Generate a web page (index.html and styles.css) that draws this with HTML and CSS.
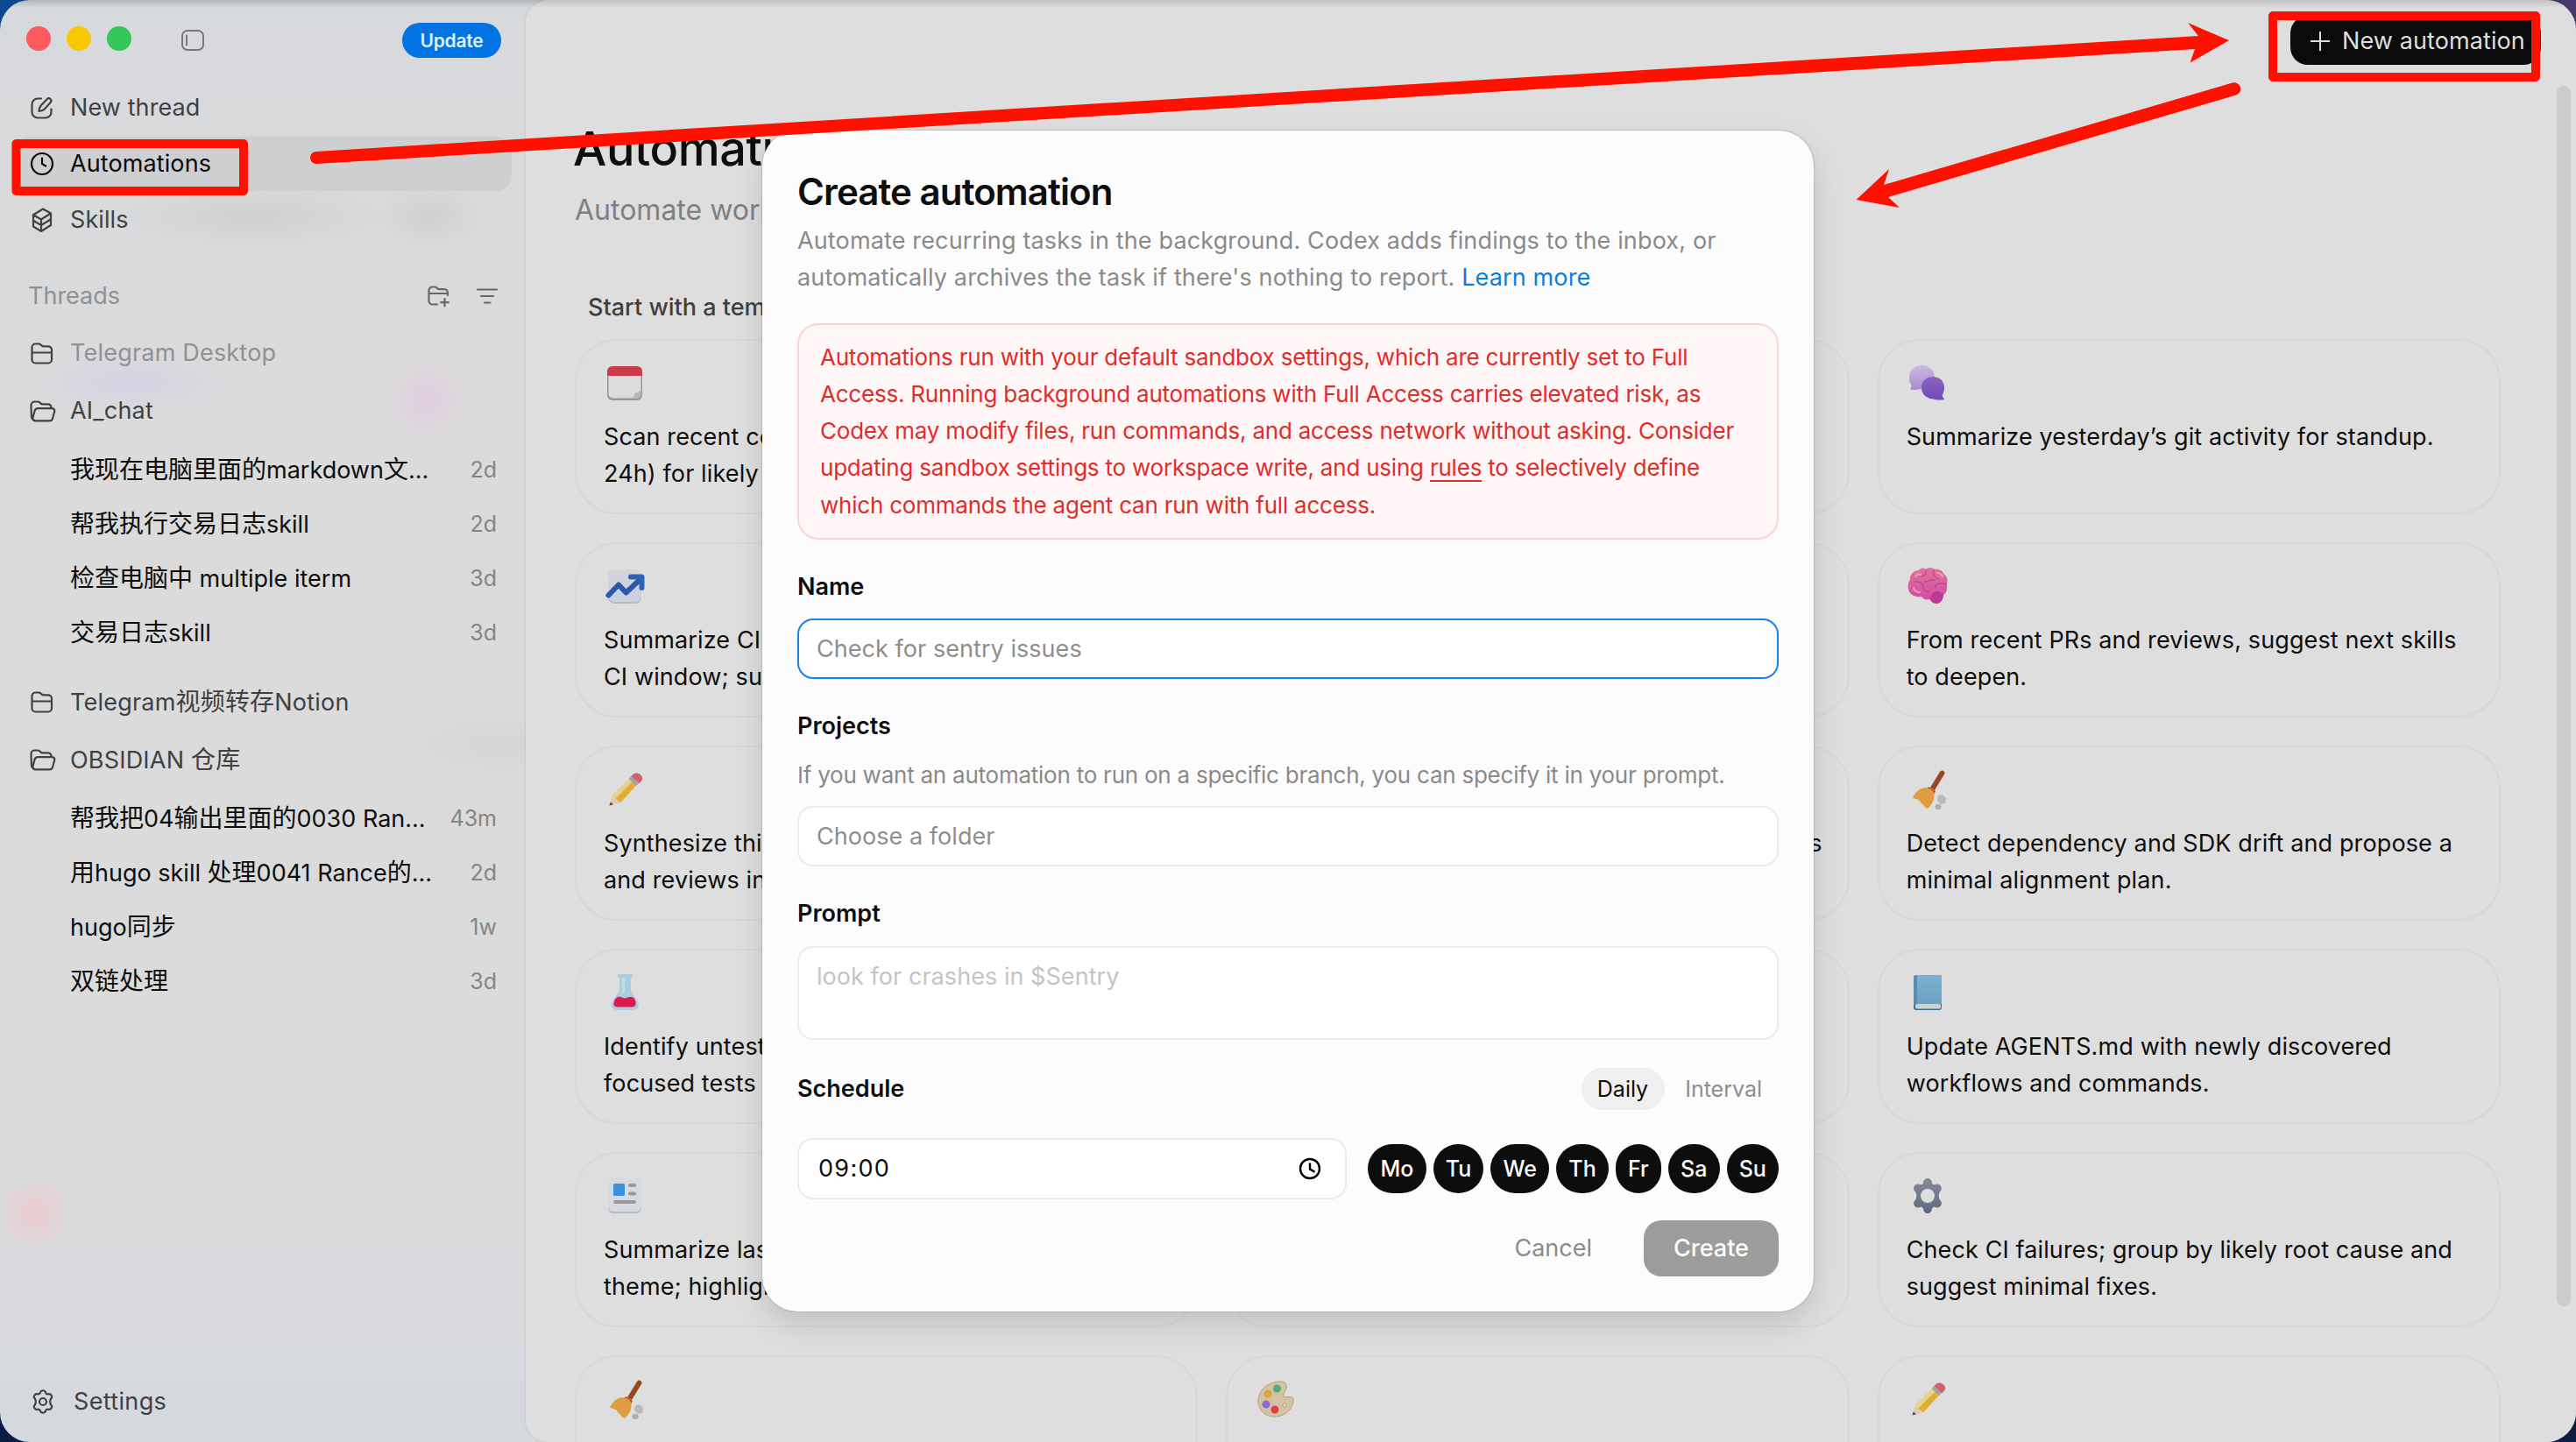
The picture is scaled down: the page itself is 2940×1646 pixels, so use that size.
FILE: index.html
```
<!DOCTYPE html>
<html lang="en">
<head>
    <meta charset="utf-8">
    <title>Automations</title>
    <link rel="stylesheet" href="styles.css">
</head>
<body>
    <!-- icon sprite -->
    <svg class="sprite">
        <defs>
            <linearGradient id="gBubbleA" x1="0" y1="0" x2="0" y2="1"><stop offset="0" stop-color="#cdb8e3"/><stop offset="1" stop-color="#a68ed0"/></linearGradient>
            <linearGradient id="gBubbleB" x1="0" y1="0" x2="0" y2="1"><stop offset="0" stop-color="#8d63c8"/><stop offset="1" stop-color="#6d4cb2"/></linearGradient>
            <linearGradient id="gBrain" x1="0" y1="0" x2="0" y2="1"><stop offset="0" stop-color="#e2739a"/><stop offset="1" stop-color="#cf49a6"/></linearGradient>
            <linearGradient id="gBook" x1="0" y1="0" x2="0" y2="1"><stop offset="0" stop-color="#7db2d2"/><stop offset="1" stop-color="#6c9fc2"/></linearGradient>
            <linearGradient id="gGear" x1="0" y1="0" x2="0" y2="1"><stop offset="0" stop-color="#868b95"/><stop offset="1" stop-color="#5c6880"/></linearGradient>
            <linearGradient id="gPage" x1="0" y1="0" x2="0" y2="1"><stop offset="0" stop-color="#d3d6da"/><stop offset="1" stop-color="#c9d0df"/></linearGradient>
        </defs>
        <symbol id="folder" viewBox="0 0 28 28">
            <path d="M2.5 7.5a4 4 0 0 1 4-4h3.6c1 0 1.700.3 2.400 1l1 .9c.6.6 1.300.9 2.200.9h5.300a4 4 0 0 1 4 4v11.200a4 4 0 0 1-4 4H6.500a4 4 0 0 1-4-4zM2.500 13.500h22.500"/>
        </symbol>
        <symbol id="folder-open" viewBox="0 0 30 28">
            <path d="M5 24.500C3 24 2 22.500 1.900 20.500L1.500 7.500a4 4 0 0 1 4-4H9c1 0 1.700.3 2.400 1l1 .9c.6.6 1.300.9 2.200.9h5.900c2.200 0 3.800 1.500 4 3.700v1.200M9.200 11.200h16.300c2 0 3.200 1.700 2.700 3.500l-2.200 8c-.5 1.700-1.800 2.700-3.500 2.700H6.300c-2 0-3.300-1.700-2.800-3.600l2.100-7.800c.5-1.700 1.900-2.800 3.600-2.800z"/>
        </symbol>
        <symbol id="broom" viewBox="0 0 48 48">
            <path d="M27 22 38 4c1-1.500 2.500-2 4-1s2 2.500 1 4L32 25z" fill="#98481d"/>
            <path d="M25 21l8 5-2 4-9-5z" fill="#b5442a"/>
            <path d="M23 22c4 1 7 3 8.500 6 .5 7-1.500 13-7.500 18-3-1-5-3.500-6-6-1 .3-1 .3-1.500 0-.5-3-3-5-9.500-6 3-8 9-12 16-12z" fill="#e09c41"/>
            <path d="M36 31l5-1 4 4-1 6-5 1-4-4z" fill="#b9b9bb"/>
            <path d="M34 41l4 0 2 3-2 3h-4l-2-3z" fill="#aeaeb0"/>
        </symbol>
        <symbol id="pencil" viewBox="0 0 48 48">
            <path d="M6.500 42.500 10 30.500 19.500 39z" fill="#dfcdac"/>
            <path d="M6.500 42.500 7.700 38.500l3.300 2.800z" fill="#4c4c4c"/>
            <path d="M10 30.500 29 11.500l5 4.500-19.500 19z" fill="#ead08a"/>
            <path d="M13.500 34.500 33 15l4.500 4-18 20z" fill="#dfae34"/>
            <path d="M28.500 12l3.500-3.500 8.500 8-3.500 3.500z" fill="#a3a3a3"/>
            <path d="M31.500 9c3-4 7-4.500 10.500-1.500s2.500 6.500-1.500 9.500z" fill="#d0616b"/>
        </symbol>
        <symbol id="calendar" viewBox="0 0 48 48">
            <rect x="4" y="5" width="40" height="39" rx="6" fill="#989898"/>
            <rect x="5.500" y="9" width="37" height="32.500" rx="5" fill="#dcdcdc"/>
            <path d="M4 16v-5a6 6 0 0 1 6-6h28a6 6 0 0 1 6 6v5z" fill="#cb3b4a"/>
            <path d="M30 41.500c5-1 5.500-3 5.500-6 4 0 6.500-2 7-6v7a5 5 0 0 1-5 5z" fill="#b7b7b7"/>
        </symbol>
        <symbol id="bubbles" viewBox="0 0 48 48">
            <path d="M17.500 4C9 4 3 10 3 17.500c0 4.500 1 7 2.500 9.500L4.500 32c7 0 12-.5 16-2.500C27 27.500 32 24 32 17.500 32 10 26 4 17.500 4z" fill="url(#gBubbleA)"/>
            <path d="M30 17c8 0 13 5.500 13 12 0 4-1 7.500-2.500 9.500L43 43c-5 .8-9 .8-13-.5-8-1-13-6-13-13S22 17 30 17z" fill="url(#gBubbleB)"/>
        </symbol>
        <symbol id="chart" viewBox="0 0 48 48">
            <rect x="5" y="6" width="38" height="38" rx="7" fill="#b5bac6"/>
            <rect x="5" y="5" width="38" height="37" rx="7" fill="url(#gPage)"/>
            <path d="M5.500 34.500 17 22.500l8.500 9L42 16" fill="none" stroke="#2b58a8" stroke-width="6" stroke-linejoin="round" stroke-linecap="round"/>
            <path d="M31 13.500h12.500V26" fill="none" stroke="#2f62b5" stroke-width="6" stroke-linejoin="round" stroke-linecap="round"/>
        </symbol>
        <symbol id="brain" viewBox="0 0 48 48">
            <path d="M14 6c2-3 6-3 8-1 3-3 8-2 10 0 5-1 10 2 11 6 4 2 4 7 3 11 1 6-1 10-4 12 0 5-3 9-7 9-4 1-7-1-9-4-4 1-7 0-9-3-7 1-14-2-15-9-1-4 0-8 2-10C3 11 8 6 14 6z" fill="url(#gBrain)"/>
            <path d="M29 33c4-4 8-4 13 0 0 6-3 11-8 11-4 0-6-3-7-6z" fill="#bd3796"/>
            <path d="M22 6c1 4-2 7-6 7M31 6c-1 5 1 9 6 10M8 19c6-1 10 1 11 6s4 6 7 5M45 22c-5-2-12-1-13 4M20 19c5 0 7-3 12-2" fill="none" stroke="#c24a8c" stroke-width="1.500" stroke-linecap="round"/>
            <path d="M10 13c2-3 4-3 6-2M35 9c3 0 5 2 6 4M8 26c1 4 4 5 7 5" fill="none" stroke="#efa0bf" stroke-width="2" stroke-linecap="round"/>
        </symbol>
        <symbol id="flask" viewBox="0 0 48 48">
            <path d="M16 3h17v4h-2v15l7.500 11c3 6 1 11-5 11h-18c-6 0-8-5-5-11L18 22V7h-2z" fill="#aacfe0"/>
            <path d="M21 7h3v16l-3 4z" fill="#c3dde8"/>
            <path d="M11.500 36c1-5 4-8 7.500-7s5 2 7 1 7-2 9 1 3 9-2 9.500H16c-3 0-5-1.500-4.500-4.500z" fill="#dd1a52"/>
        </symbol>
        <symbol id="book" viewBox="0 0 48 48">
            <rect x="8" y="4" width="32" height="40" rx="3" fill="#44708f"/>
            <rect x="10" y="37" width="29" height="5.500" rx="2" fill="#ccd3d8"/>
            <path d="M8 7a3 3 0 0 1 3-3h26a3 3 0 0 1 3 3v30H11c-1.500 0-3 1-3 2z" fill="url(#gBook)"/>
            <path d="M8 7c0-2 1.500-3 4-3v33c-2 0-4 1-4 3z" fill="#5a8cb0"/>
        </symbol>
        <symbol id="news" viewBox="0 0 48 48">
            <rect x="5" y="6" width="38" height="38" rx="6" fill="#b4bcc6"/>
            <rect x="5" y="4" width="38" height="38" rx="6" fill="#d6dbe1"/>
            <rect x="11" y="10" width="13" height="14" rx="1.500" fill="#3b92dc"/>
            <path d="M30 12h5M30 21.500h5M13 31h22" stroke="#9599a0" stroke-width="4" stroke-linecap="round"/>
        </symbol>
        <symbol id="gear" viewBox="0 0 48 48">
            <path fill-rule="evenodd" d="M19 10c0-8 10-8 10 0l2.500 1.500c6.500-4 11.500 4 6 8.500-1 2.500-1 5.500 0 8 5.500 4.500.5 12.500-6 8.500L29 38c0 8-10 8-10 0l-2.500-1.500c-6.500 4-11.500-4-6-8.500 1-2.500 1-5.500 0-8-5.500-4.500-.5-12.500 6-8.500zM24 16a8 8 0 1 0 0 16 8 8 0 1 0 0-16z" fill="url(#gGear)"/>
        </symbol>
        <symbol id="palette" viewBox="0 0 48 48">
            <path d="M28 4c7-1 10 4 7 10-1 3-3 5-2 7 3 2 8-1 11 2 1 9-6 20-20 21C13 45 4 37 4 27 4 14 14 5 28 4zM33 29a2.500 2.500 0 0 0 1 4.500 2.500 2.500 0 0 0 1-4.500z" fill="#d3c3a0" stroke="#b3a07c" stroke-width="1"/>
            <circle cx="25.500" cy="12" r="4.500" fill="#4fae7c"/>
            <circle cx="15" cy="18" r="4.500" fill="#e0a241"/>
            <circle cx="13" cy="30" r="4.500" fill="#8c68d2"/>
            <circle cx="23" cy="36" r="4.500" fill="#da4250"/>
        </symbol>
    </svg>

    <div class="window">
        <aside class="sidebar">
            <div class="titlebar">
                <span class="light light-red"></span>
                <span class="light light-yellow"></span>
                <span class="light light-green"></span>
                <svg class="toggle" viewBox="0 0 28 28"><rect x="2" y="3" width="24" height="22" rx="6"/><path d="M7 8.500v11"/></svg>
                <button class="update">Update</button>
            </div>

            <nav class="nav">
                <a class="nav-item">
                    <svg class="icon" viewBox="0 0 28 28"><path d="M13 3.500H9a6.500 6.500 0 0 0-6.500 6.500v9A6.500 6.500 0 0 0 9 25.500h9a6.500 6.500 0 0 0 6.500-6.500v-3.500M10.500 18c0-3 .6-4.600 2.200-6.400l6.900-7.400a2.700 2.700 0 0 1 4 3.700l-6.800 7.500c-1.700 1.800-3.300 2.400-6.300 2.600z"/></svg>
                    New thread
                </a>
                <a class="nav-item active">
                    <svg class="icon" viewBox="0 0 28 28"><circle cx="14" cy="14" r="12"/><path d="M14 7.500V14l4.200 2.500"/></svg>
                    Automations
                </a>
                <a class="nav-item">
                    <svg class="icon" viewBox="0 0 28 28"><path d="M13 27 4 21.500V8.200L15 1.500l9 5v13.500zM4 8.200l9 5.300 11-7M13 13.500V27M4 14.800l9 5.300 11-6.800"/></svg>
                    Skills
                </a>
            </nav>

            <div class="threads-head">
                <span>Threads</span>
                <svg class="icon-sm" viewBox="0 0 28 28"><path d="M13 23.500H7.500a4 4 0 0 1-4-4V7.500a4 4 0 0 1 4-4H10c1 0 1.700.3 2.400 1l.7.7c.7.7 1.400 1 2.400 1H21a4 4 0 0 1 4 4V13M3.500 11h21.500M21.500 17v8.500M17.200 21.200h8.600"/></svg>
                <svg class="icon-sm" viewBox="0 0 28 28"><path d="M3 6.500h22M7 14h14M11 21.500h6.500"/></svg>
            </div>

            <div class="project muted"><svg class="icon"><use href="#folder"/></svg>Telegram Desktop</div>
            <div class="project"><svg class="icon icon-open"><use href="#folder-open"/></svg>AI_chat</div>
            <ul class="thread-list">
                <li><span><i>我现在电脑里面的</i>markdown<i>文</i>...</span><time>2d</time></li>
                <li><span><i>帮我执行交易日志</i>skill</span><time>2d</time></li>
                <li><span><i>检查电脑中</i> multiple iterm</span><time>3d</time></li>
                <li><span><i>交易日志</i>skill</span><time>3d</time></li>
            </ul>
            <div class="project"><svg class="icon"><use href="#folder"/></svg><span>Telegram<i>视频转存</i>Notion</span></div>
            <div class="project"><svg class="icon icon-open"><use href="#folder-open"/></svg><span>OBSIDIAN <i>仓库</i></span></div>
            <ul class="thread-list">
                <li><span><i>帮我把</i>04<i>输出里面的</i>0030 Ran...</span><time>43m</time></li>
                <li><span><i>用</i>hugo skill <i>处理</i>0041 Rance<i>的</i>...</span><time>2d</time></li>
                <li><span>hugo<i>同步</i></span><time>1w</time></li>
                <li><span><i>双链处理</i></span><time>3d</time></li>
            </ul>

            <a class="nav-item settings">
                <svg class="icon icon-lg" viewBox="0 0 30 30"><path d="M12 4.500c.8-3 5.200-3 6 0 .4 1.400 1.800 2.200 3.200 1.800 3-.8 5.200 3 3 5.200-1 1-1 2.600-1 3.500s0 2.500 1 3.500c2.200 2.200 0 6-3 5.200-1.400-.4-2.800.4-3.200 1.800-.8 3-5.200 3-6 0-.4-1.400-1.800-2.200-3.200-1.800-3 .8-5.200-3-3-5.200 1-1 1-2.600 1-3.500s0-2.500-1-3.500c-2.200-2.200 0-6 3-5.200 1.400.4 2.800-.4 3.200-1.800z"/><circle cx="15" cy="15" r="4"/></svg>
                Settings
            </a>
        </aside>

        <main class="main">
            <header class="toolbar">
                <button class="new-automation">
                    <svg viewBox="0 0 24 24"><path d="M12 1v22M1 12h22"/></svg>
                    New automation
                </button>
            </header>
            <h1>Automations</h1>
            <p class="subtitle">Automate work</p>
            <h2>Start with a template</h2>

            <div class="templates">
                <div class="card"><svg><use href="#calendar"/></svg><p>Scan recent commits<br>24h) for likely bugs.</p></div>
                <div class="card"><svg><use href="#book"/></svg></div>
                <div class="card"><svg><use href="#bubbles"/></svg><p>Summarize yesterday’s git activity for standup.</p></div>

                <div class="card"><svg><use href="#chart"/></svg><p>Summarize CI failures<br>CI window; suggest</p></div>
                <div class="card"><svg><use href="#gear"/></svg></div>
                <div class="card"><svg><use href="#brain"/></svg><p>From recent PRs and reviews, suggest next skills to deepen.</p></div>

                <div class="card"><svg><use href="#pencil"/></svg><p>Synthesize this week<br>and reviews into</p></div>
                <div class="card"><svg><use href="#chart"/></svg><p>Compare recent changes to benchmarks or traces</p></div>
                <div class="card"><svg><use href="#broom"/></svg><p>Detect dependency and SDK drift and propose a minimal alignment plan.</p></div>

                <div class="card"><svg><use href="#flask"/></svg><p>Identify untested paths<br>focused tests here.</p></div>
                <div class="card"><svg><use href="#book"/></svg></div>
                <div class="card"><svg><use href="#book"/></svg><p>Update AGENTS.md with newly discovered workflows and commands.</p></div>

                <div class="card"><svg><use href="#news"/></svg><p>Summarize last week<br>theme; highlight</p></div>
                <div class="card"><svg><use href="#pencil"/></svg></div>
                <div class="card"><svg><use href="#gear"/></svg><p>Check CI failures; group by likely root cause and suggest minimal fixes.</p></div>

                <div class="card"><svg><use href="#broom"/></svg></div>
                <div class="card"><svg><use href="#palette"/></svg></div>
                <div class="card"><svg><use href="#pencil"/></svg></div>
            </div>
            <div class="scrollbar"></div>
        </main>

        <section class="modal">
            <h3>Create automation</h3>
            <p class="modal-text">Automate recurring tasks in the background. Codex adds findings to the inbox, or<br>automatically archives the task if there's nothing to report. <a>Learn more</a></p>

            <div class="warning">
                Automations run with your default sandbox settings, which are currently set to Full<br>
                Access. Running background automations with Full Access carries elevated risk, as<br>
                Codex may modify files, run commands, and access network without asking. Consider<br>
                updating sandbox settings to workspace write, and using <u>rules</u> to selectively define<br>
                which commands the agent can run with full access.
            </div>

            <label class="label-name">Name</label>
            <div class="field focused">Check for sentry issues</div>

            <label class="label-projects">Projects</label>
            <p class="hint">If you want an automation to run on a specific branch, you can specify it in your prompt.</p>
            <div class="field">Choose a folder</div>

            <label class="label-prompt">Prompt</label>
            <div class="field field-area">look for crashes in $Sentry</div>

            <div class="schedule-head">
                <label>Schedule</label>
                <span class="pill selected">Daily</span>
                <span class="pill">Interval</span>
            </div>
            <div class="schedule-row">
                <div class="field time">
                    <span>09:00</span>
                    <svg viewBox="0 0 28 28"><circle cx="14" cy="14" r="11"/><path d="M14 7.500v7l5.500 3.300"/></svg>
                </div>
                <div class="days">
                    <span>Mo</span><span>Tu</span><span>We</span><span>Th</span><span>Fr</span><span>Sa</span><span>Su</span>
                </div>
            </div>
            <div class="modal-foot">
                <button class="cancel">Cancel</button>
                <button class="create">Create</button>
            </div>
        </section>
    </div>

    <!-- red call-outs drawn over the window -->
    <svg class="marks" viewBox="0 0 2940 1646">
        <rect x="18.500" y="164" width="259.500" height="54"/>
        <rect x="2594" y="18" width="300" height="70"/>
        <path class="arrow" d="M361 173 2509 41 2497 26 2544 46 2499.600 71.500 2505 56 361 187a7 7 0 0 1 0-14z"/>
        <path class="arrow" d="M2548 94.500 2150 211 2156 193 2118.500 228 2168 237 2155 225 2552 108.500a7.200 7.200 0 0 0-4-14z"/>
    </svg>
</body>
</html>
```
FILE: styles.css
```
* {
    box-sizing: border-box;
    margin: 0;
    padding: 0;
}

body {
    width: 2940px;
    height: 1646px;
    overflow: hidden;
    background:
        radial-gradient(circle at 0 0, #0d4c95, rgba(13, 76, 149, 0) 200px),
        radial-gradient(circle at 100% 0, #4a3a6b, rgba(74, 58, 107, 0) 200px),
        #0c1d45;
    font: 400 27px/42px Inter, "Noto Sans CJK SC", sans-serif;
    color: #0e0e0e;
}

button {
    border: 0;
    font: inherit;
}

i {
    font-style: normal;
    font-size: 28px;
}

.sprite {
    position: absolute;
    width: 0;
    height: 0;
}

.window {
    position: relative;
    display: flex;
    width: 2940px;
    height: 1646px;
    overflow: hidden;
    border-radius: 34px;
    background:
        linear-gradient(rgba(0, 0, 0, .16), rgba(0, 0, 0, 0) 9px),
        radial-gradient(circle at 40px 1385px, rgba(236, 200, 205, .7) 10px, rgba(236, 200, 205, 0) 42px),
        radial-gradient(circle at 487px 456px, rgba(226, 200, 226, .65) 12px, rgba(226, 200, 226, 0) 42px),
        radial-gradient(ellipse 130px 40px at 150px 437px, rgba(208, 208, 230, .75), rgba(208, 208, 230, 0)),
        radial-gradient(ellipse 150px 35px at 290px 247px, rgba(200, 201, 203, .6), rgba(200, 201, 203, 0)),
        radial-gradient(ellipse 60px 35px at 490px 247px, rgba(200, 201, 203, .6), rgba(200, 201, 203, 0)),
        radial-gradient(ellipse 120px 40px at 570px 850px, rgba(208, 208, 208, .6), rgba(208, 208, 208, 0)),
        linear-gradient(#d7dadd 0, #d8d9db 200px, #dbdbdb 420px, #dbdbdb 1180px, #d9dadd 1450px, #d4d9de 1646px);
}

/* sidebar */

.sidebar {
    display: flex;
    flex-direction: column;
    width: 600px;
    height: 1646px;
}

.titlebar {
    display: flex;
    align-items: center;
    height: 91px;
    padding: 0 28px 3px 30px;
}

.light {
    width: 28px;
    height: 28px;
    margin-right: 18px;
    border-radius: 50%;
}

.light-red { background: #fe5a5e; }
.light-yellow { background: #f8c802; }
.light-green { background: #34c759; }

.toggle {
    width: 28px;
    height: 28px;
    margin: 4px 0 0 38px;
    fill: none;
    stroke: #77787a;
    stroke-width: 2;
    stroke-linecap: round;
}

.update {
    width: 113px;
    height: 40px;
    margin: 4px 0 0 auto;
    border-radius: 20px;
    background: #0273e3;
    color: #e3eefa;
    font-size: 21px;
    font-weight: 600;
    letter-spacing: -.2px;
}

.nav {
    display: flex;
    flex-direction: column;
}

.nav-item {
    display: flex;
    align-items: center;
    height: 62px;
    margin: 1px 16px;
    padding-left: 18px;
    border-radius: 18px;
    color: #404143;
    letter-spacing: .1px;
}

.nav-item.active {
    background: #cecfd0;
    color: #0b0b0b;
}

.icon {
    flex: none;
    width: 28px;
    height: 28px;
    margin-right: 18px;
    fill: none;
    stroke: currentColor;
    stroke-width: 2.2;
    stroke-linejoin: round;
    stroke-linecap: round;
}

.icon-open {
    width: 30px;
    margin-right: 16px;
}

.icon-lg {
    width: 30px;
    height: 30px;
    margin-right: 20px;
}

.threads-head {
    display: flex;
    align-items: center;
    height: 64px;
    margin-top: 23px;
    padding: 0 30px 0 32px;
    color: #909193;
}

.threads-head span {
    margin-right: auto;
}

.icon-sm {
    width: 28px;
    height: 28px;
    margin-left: 28px;
    fill: none;
    stroke: #66676a;
    stroke-width: 2.2;
    stroke-linecap: round;
}

.project {
    display: flex;
    align-items: center;
    height: 62px;
    margin: 2px 0;
    padding-left: 34px;
    color: #404142;
    letter-spacing: .2px;
}

.project.muted {
    color: #909193;
}

.project.muted .icon {
    color: #404142;
}

.thread-list {
    list-style: none;
    margin: 3px 0 15px;
}

.thread-list li {
    display: flex;
    align-items: center;
    justify-content: space-between;
    height: 62px;
    padding: 0 33px 0 80px;
    white-space: nowrap;
}

.thread-list time {
    color: #858585;
    font-size: 25px;
}

.settings {
    margin-top: auto;
    margin-bottom: 15px;
    letter-spacing: .35px;
}

/* main panel */

.main {
    position: relative;
    display: flex;
    flex-direction: column;
    width: 2340px;
    height: 1646px;
    padding: 0 86px 0 56px;
    overflow: hidden;
    border-radius: 26px 0 0 26px;
    background: linear-gradient(#c0c0c0, #dedede 9px);
    box-shadow: 0 0 3px rgba(0, 0, 0, .16);
}

.toolbar {
    display: flex;
    justify-content: flex-end;
    flex: none;
    height: 134px;
    margin-right: -46px;
    padding-top: 18px;
}

.new-automation {
    display: flex;
    align-items: center;
    width: 286px;
    height: 56px;
    padding: 1px 0 0 22px;
    border-radius: 20px;
    background: #0b0b0b;
    color: #dedede;
    letter-spacing: .1px;
    white-space: nowrap;
}

.new-automation svg {
    width: 24px;
    height: 24px;
    margin-right: 13px;
    fill: none;
    stroke: #dedede;
    stroke-width: 2;
}

h1 {
    margin-left: -2px;
    font-size: 54px;
    font-weight: 500;
    line-height: 72px;
    letter-spacing: -.4px;
}

.subtitle {
    margin-top: 11px;
    font-size: 32px;
    line-height: 46px;
    color: #808080;
}

h2 {
    margin: 68px 0 16px 15px;
    font-size: 27px;
    font-weight: 500;
    line-height: 40px;
    color: #3f3f3f;
}

.templates {
    display: grid;
    grid-template-columns: repeat(3, 1fr);
    grid-auto-rows: 200px;
    gap: 32px;
}

.card {
    padding: 24px 20px 0 31px;
    border: 2px solid #d7d7d7;
    border-radius: 48px;
}

.card svg {
    display: block;
    width: 48px;
    height: 48px;
}

.card p {
    margin-top: 17px;
    letter-spacing: .12px;
}

.scrollbar {
    position: absolute;
    top: 98px;
    right: 6px;
    width: 16px;
    height: 1393px;
    border-radius: 8px;
    background: #cbcbcb;
}

/* dialog */

.modal {
    position: absolute;
    top: 149px;
    left: 870px;
    display: flex;
    flex-direction: column;
    width: 1200px;
    height: 1348px;
    padding: 44px 40px 0;
    border-radius: 40px;
    background: #fcfcfc;
    box-shadow: 0 0 2px rgba(0, 0, 0, .35), 0 14px 34px rgba(0, 0, 0, .13);
}

.modal h3 {
    font-size: 42px;
    font-weight: 600;
    line-height: 52px;
    letter-spacing: -.9px;
}

.modal-text {
    margin-top: 9px;
    line-height: 42.300px;
    letter-spacing: .14px;
    color: #8a8a8a;
}

.modal-text a {
    color: #0a7de4;
}

.warning {
    height: 247px;
    margin-top: 30px;
    padding: 16px 24px;
    border: 2px solid #fbd3d4;
    border-radius: 24px;
    background: #fff7f7;
    color: #e02d2a;
    font-size: 26px;
    line-height: 42.300px;
    letter-spacing: -.22px;
    white-space: nowrap;
}

.warning u {
    text-decoration-thickness: 2px;
    text-underline-offset: 5px;
}

.modal label {
    font-weight: 600;
    line-height: 40px;
}

.label-name {
    margin: 34px 0 16px;
}

.label-projects,
.label-prompt {
    margin-top: 34px;
}

.hint {
    margin: 16px 0 15px;
    font-size: 26px;
    line-height: 40px;
    letter-spacing: -.24px;
    color: #8a8a8a;
    white-space: nowrap;
}

.field {
    display: flex;
    align-items: center;
    height: 69px;
    padding: 2px 20px 0;
    border: 2px solid #ececec;
    border-radius: 18px;
    background: #fff;
    color: #8e8e8e;
    letter-spacing: .05px;
}

.field.focused {
    border-color: #1a80ea;
}

.field-area {
    align-items: flex-start;
    height: 107px;
    margin-top: 17px;
    padding-top: 12px;
    color: #c4c4c4;
}

.schedule-head {
    display: flex;
    align-items: center;
    height: 48px;
    margin-top: 32px;
}

.schedule-head label {
    margin-right: auto;
}

.pill {
    padding: 0 19px 0 18px;
    border-radius: 24px;
    font-size: 25px;
    line-height: 48px;
    color: #8e8e8e;
}

.pill.selected {
    margin-right: 5px;
    background: #efefef;
    color: #0e0e0e;
}

.schedule-row {
    display: flex;
    align-items: center;
    gap: 24px;
    margin-top: 32px;
}

.time {
    flex: 1;
    height: 70px;
    justify-content: space-between;
    padding: 1px 26px 0 22px;
    color: #0e0e0e;
    letter-spacing: 1.300px;
}

.time svg {
    width: 28px;
    height: 28px;
    fill: none;
    stroke: #000;
    stroke-width: 2.4;
}

.days {
    display: flex;
    gap: 8px;
}

.days span {
    height: 56px;
    padding: 0 14.150px;
    border-radius: 33px;
    background: #0d0d0d;
    color: #fcfcfc;
    font-size: 25px;
    font-weight: 500;
    line-height: 57px;
}

.modal-foot {
    display: flex;
    justify-content: flex-end;
    gap: 59px;
    margin-top: 24px;
}

.modal-foot button {
    padding-top: 1px;
}

.cancel {
    background: none;
    color: #8a8a8a;
}

.create {
    width: 154px;
    height: 64px;
    border-radius: 20px;
    background: #9c9c9c;
    color: #fcfcfc;
    font-weight: 500;
}

/* call-outs */

.marks {
    position: absolute;
    top: 0;
    left: 0;
    width: 2940px;
    height: 1646px;
}

.marks rect {
    fill: none;
    stroke: #ff1100;
    stroke-width: 10;
    stroke-linejoin: round;
}

.marks .arrow {
    fill: #ff1100;
}
```
